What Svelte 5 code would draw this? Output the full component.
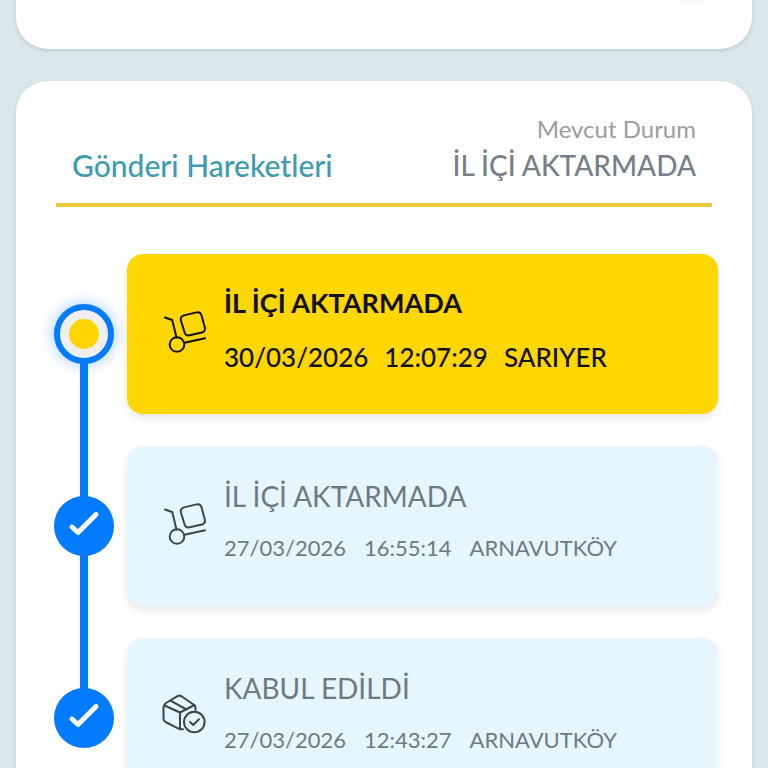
<script>
  const currentStatus = 'İL İÇİ AKTARMADA';

  const movements = [
    { status: 'İL İÇİ AKTARMADA', date: '30/03/2026', time: '12:07:29', place: 'SARIYER', icon: 'trolley', active: true },
    { status: 'İL İÇİ AKTARMADA', date: '27/03/2026', time: '16:55:14', place: 'ARNAVUTKÖY', icon: 'trolley', active: false },
    { status: 'KABUL EDİLDİ', date: '27/03/2026', time: '12:43:27', place: 'ARNAVUTKÖY', icon: 'package', active: false }
  ];
</script>

<main class="page">
  <section class="panel summary">
    <button class="summary-action" type="button" aria-label="Detay"></button>
  </section>

  <section class="panel history">
    <header class="history-header">
      <h2>Gönderi Hareketleri</h2>
      <div class="current">
        <span class="current-label">Mevcut Durum</span>
        <span class="current-value">{currentStatus}</span>
      </div>
    </header>

    <ol class="timeline">
      {#each movements as movement}
        <li class="step" class:active={movement.active}>
          <div class="rail">
            <span class="marker">
              {#if movement.active}
                <span class="dot"></span>
              {:else}
                <svg width="60" height="60" viewBox="0 0 60 60" aria-hidden="true">
                  <path d="M18 31L24 36.500L42 18.500" />
                </svg>
              {/if}
            </span>
          </div>
          <article class="card">
            <svg class="icon" width="44" height="44" viewBox="0 0 44 44" aria-hidden="true">
              {#if movement.icon === 'trolley'}
                <path d="M3 9.500L10.200 12L14.500 29.500" />
                <circle cx="15" cy="36.500" r="7.300" />
                <path d="M22.500 34.800L43 30.300" />
                <path d="M22 7.400L34.500 4.400Q38.500 3.600 39.500 7.300L42.800 19.500Q43.700 23.500 40 24.600L27.500 27.300Q23.600 28 22.600 24.500L18.900 12.500Q18 8.500 22 7.400Z" />
              {:else}
                <path d="M33.500 18V16Q33.500 13.500 31 12.200L19.500 4.300Q17.500 3 15.500 4.200L4 11Q1.500 12.500 1.500 15V26.500Q1.500 28.700 3.500 30L18 37.300H21" />
                <path d="M2.500 13.500L18 20.500L32.500 13M18 20.500V37M8.500 8.700L24.500 17.500" />
                <circle cx="32.300" cy="30" r="10.300" />
                <path d="M28 30L31.200 33L37 27.300" />
              {/if}
            </svg>
            <div class="info">
              <h3>{movement.status}</h3>
              <p>
                <span>{movement.date}</span>
                <span>{movement.time}</span>
                <span>{movement.place}</span>
              </p>
            </div>
          </article>
        </li>
      {/each}
    </ol>
  </section>
</main>

<style>
  :global(body) {
    margin: 0;
    background: #dae8eb;
  }

  .page {
    display: flex;
    flex-direction: column;
    gap: 32px;
    padding: 0 16px;
    font-family: Lato, 'Open Sans', sans-serif;
  }

  .panel {
    background: #fff;
    box-shadow: 0 2px 4px rgba(0, 0, 0, 0.12);
  }

  .summary {
    position: relative;
    padding-bottom: 49px;
    border-radius: 0 0 32px 32px;
  }

  .summary-action {
    position: absolute;
    right: 36px;
    bottom: 52px;
    width: 48px;
    height: 48px;
    padding: 0;
    border: none;
    border-radius: 50%;
    background: #fff;
    box-shadow: 0 2px 8px rgba(0, 0, 0, 0.16);
  }

  .history {
    padding: 32px 34px 0 38px;
    border-radius: 32px;
  }

  .history-header {
    display: flex;
    justify-content: space-between;
    align-items: flex-end;
    margin: 0 6px 47px 2px;
    padding: 0 16px 18px;
    border-bottom: 4px solid #f2c83c;
  }

  h2 {
    margin: 0;
    font-size: 30px;
    line-height: 40px;
    font-weight: 500;
    color: #3f9cae;
  }

  .current {
    display: flex;
    flex-direction: column;
    align-items: flex-end;
  }

  .current-label {
    font-size: 24px;
    line-height: 32px;
    color: #999da1;
  }

  .current-value {
    font-size: 28px;
    line-height: 40px;
    font-weight: 500;
    color: #777f89;
  }

  .timeline {
    margin: 0;
    padding: 0;
    list-style: none;
  }

  .step {
    display: flex;
    gap: 13px;
  }

  .rail {
    position: relative;
    display: flex;
    align-items: center;
    width: 60px;
    margin-bottom: 32px;
  }

  /* blue line down to the next marker */
  .step:not(:last-child) .rail::after {
    content: '';
    position: absolute;
    top: 50%;
    left: 26px;
    width: 8px;
    height: calc(100% + 32px);
    background: #027bff;
  }

  .marker {
    position: relative;
    z-index: 1;
    display: flex;
    align-items: center;
    justify-content: center;
    width: 60px;
    height: 60px;
    box-sizing: border-box;
    border-radius: 50%;
    background: #027bff;
  }

  .marker path {
    fill: none;
    stroke: #fff;
    stroke-width: 5;
    stroke-linecap: round;
    stroke-linejoin: round;
  }

  .active .marker {
    border: 6px solid #027bff;
    background: #efefef;
    box-shadow: 0 0 16px rgba(2, 123, 255, 0.4);
  }

  .dot {
    width: 30px;
    height: 30px;
    border-radius: 50%;
    background: #fed500;
  }

  .card {
    flex: 1;
    display: flex;
    align-items: center;
    gap: 18px;
    min-height: 160px;
    margin-bottom: 32px;
    padding: 28px 35px 36px;
    box-sizing: border-box;
    border-radius: 16px;
    background: #e5f6ff;
    color: #6f7982;
    box-shadow: 0 4px 8px rgba(0, 0, 0, 0.1);
  }

  .active .card {
    background: #fed600;
    color: #111;
  }

  .icon {
    flex-shrink: 0;
    overflow: visible;
    fill: none;
    stroke: #3b454e;
    stroke-width: 2;
    stroke-linecap: round;
    stroke-linejoin: round;
  }

  .active .icon {
    stroke: #111;
  }

  h3 {
    margin: 0 0 12px;
    font-size: 28px;
    line-height: 40px;
    font-weight: 400;
  }

  .active h3 {
    margin-bottom: 14px;
    font-size: 27px;
    font-weight: 700;
  }

  .info p {
    display: flex;
    gap: 18px;
    margin: 0;
    font-size: 22px;
    line-height: 40px;
  }

  .active .info p {
    gap: 16px;
    font-size: 26px;
    font-weight: 500;
  }
</style>
